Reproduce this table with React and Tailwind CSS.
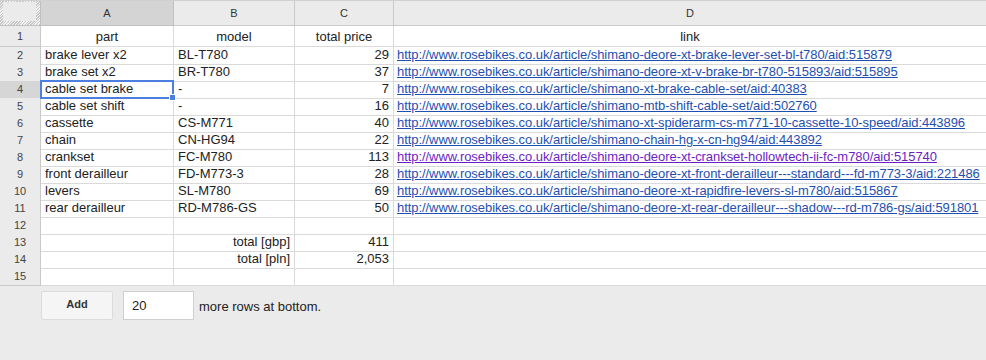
import React from 'react'

const rows = [
  { part: 'brake lever x2', model: 'BL-T780', price: '29', link: 'http://www.rosebikes.co.uk/article/shimano-deore-xt-brake-lever-set-bl-t780/aid:515879' },
  { part: 'brake set x2', model: 'BR-T780', price: '37', link: 'http://www.rosebikes.co.uk/article/shimano-deore-xt-v-brake-br-t780-515893/aid:515895' },
  { part: 'cable set brake', model: '-', price: '7', link: 'http://www.rosebikes.co.uk/article/shimano-xt-brake-cable-set/aid:40383', selected: true },
  { part: 'cable set shift', model: '-', price: '16', link: 'http://www.rosebikes.co.uk/article/shimano-mtb-shift-cable-set/aid:502760' },
  { part: 'cassette', model: 'CS-M771', price: '40', link: 'http://www.rosebikes.co.uk/article/shimano-xt-spiderarm-cs-m771-10-cassette-10-speed/aid:443896' },
  { part: 'chain', model: 'CN-HG94', price: '22', link: 'http://www.rosebikes.co.uk/article/shimano-chain-hg-x-cn-hg94/aid:443892' },
  { part: 'crankset', model: 'FC-M780', price: '113', link: 'http://www.rosebikes.co.uk/article/shimano-deore-xt-crankset-hollowtech-ii-fc-m780/aid:515740', visited: true },
  { part: 'front derailleur', model: 'FD-M773-3', price: '28', link: 'http://www.rosebikes.co.uk/article/shimano-deore-xt-front-derailleur---standard---fd-m773-3/aid:221486' },
  { part: 'levers', model: 'SL-M780', price: '69', link: 'http://www.rosebikes.co.uk/article/shimano-deore-xt-rapidfire-levers-sl-m780/aid:515867' },
  { part: 'rear derailleur', model: 'RD-M786-GS', price: '50', link: 'http://www.rosebikes.co.uk/article/shimano-deore-xt-rear-derailleur---shadow---rd-m786-gs/aid:591801' },
]

const totals = [
  { label: 'total [gbp]', value: '411' },
  { label: 'total [pln]', value: '2,053' },
]

const cols = 'grid grid-cols-[41px_133px_121px_99px_1fr]'
const cell = 'border-r border-b border-[#dadada] px-[4px] whitespace-nowrap overflow-hidden'

function RowHead({ n, active }) {
  return (
    <div className={`border-r border-b border-[#c9c9c9] text-[11px] text-[#444] flex items-center justify-center ${active ? 'bg-[#d6d6d6]' : 'bg-[#ebebeb]'}`}>
      {n}
    </div>
  )
}

export default function App() {
  return (
    <div className="w-[986px] h-[360px] bg-[#ebebeb] overflow-hidden font-['Liberation_Sans',Arial,sans-serif] text-[13px] text-[#222]">
      {/* column headers */}
      <div className={`${cols} h-[26px] border-t border-t-[#d0d0d0]`}>
        <div className="border-r border-b border-[#c0c0c0] bg-[repeating-linear-gradient(135deg,#c8c8c8_0px,#c8c8c8_1px,#f2f2f2_1px,#f2f2f2_2px)] p-[3px] pr-[4px] pb-[4px] pt-[1px]">
          <div className="w-full h-full bg-[#ebebeb]" />
        </div>
        <div className="border-r border-b border-[#c0c0c0] bg-[#d4d4d4] text-[11px] text-[#333] flex items-center justify-center">A</div>
        <div className="border-r border-b border-[#c9c9c9] text-[11px] text-[#333] flex items-center justify-center">B</div>
        <div className="border-r border-b border-[#c9c9c9] text-[11px] text-[#333] flex items-center justify-center">C</div>
        <div className="border-b border-[#c9c9c9] text-[11px] text-[#333] flex items-center justify-center">D</div>
      </div>

      {/* titles */}
      <div className={`${cols} h-[21px] bg-white`}>
        <RowHead n={1} />
        <div className={`${cell} text-center leading-[22px]`}>part</div>
        <div className={`${cell} text-center leading-[22px]`}>model</div>
        <div className={`${cell} text-center leading-[22px]`}>total price</div>
        <div className={`${cell} border-r-0 text-center leading-[22px]`}>link</div>
      </div>

      {rows.map((r, i) => (
        <div key={i} className={`${cols} h-[17px] bg-white`}>
          <RowHead n={i + 2} active={r.selected} />
          {r.selected ? (
            <div className="relative border-r border-b border-[#dadada] leading-[16px]">
              <div className="absolute -left-[1px] -top-[1px] -right-[1px] -bottom-[1px] border-2 border-[#4d7fe0] px-[3px] leading-[13px] whitespace-nowrap overflow-hidden">
                {r.part}
              </div>
              <div className="absolute -right-[3px] -bottom-[3px] w-[5px] h-[5px] bg-[#4d7fe0] border border-white box-content" />
            </div>
          ) : (
            <div className={`${cell} leading-[16px]`}>{r.part}</div>
          )}
          <div className={`${cell} leading-[16px]`}>{r.model}</div>
          <div className={`${cell} text-right leading-[16px]`}>{r.price}</div>
          <div className={`${cell} border-r-0 leading-[16px] pl-[3px]`}>
            <a href="#" className={`underline tracking-[-0.06px] ${r.visited ? 'text-[#6b1ec4]' : 'text-[#1f4fb0]'}`}>{r.link}</a>
          </div>
        </div>
      ))}

      {/* empty row, totals, empty row */}
      <div className={`${cols} h-[17px] bg-white`}>
        <RowHead n={12} />
        <div className={cell} />
        <div className={cell} />
        <div className={cell} />
        <div className={`${cell} border-r-0`} />
      </div>
      {totals.map((t, i) => (
        <div key={t.label} className={`${cols} h-[17px] bg-white`}>
          <RowHead n={13 + i} />
          <div className={cell} />
          <div className={`${cell} text-right leading-[16px]`}>{t.label}</div>
          <div className={`${cell} text-right leading-[16px]`}>{t.value}</div>
          <div className={`${cell} border-r-0`} />
        </div>
      ))}
      <div className={`${cols} h-[17px] bg-white`}>
        <RowHead n={15} />
        <div className={cell} />
        <div className={cell} />
        <div className={cell} />
        <div className={`${cell} border-r-0`} />
      </div>

      {/* add rows bar */}
      <div className="flex items-center pl-[41px] pt-[6px]">
        <button className="w-[72px] h-[29px] bg-[#f5f5f5] border border-[#dcdcdc] rounded-[2px] text-[11px] font-bold text-[#333] pb-[2px]">
          Add
        </button>
        <div className="ml-[10px] w-[71px] h-[29px] bg-white border border-[#cfcfcf] text-[13px] pl-[8px] flex items-center">20</div>
        <span className="ml-[5px] mt-[3px]">more rows at bottom.</span>
      </div>
    </div>
  )
}
